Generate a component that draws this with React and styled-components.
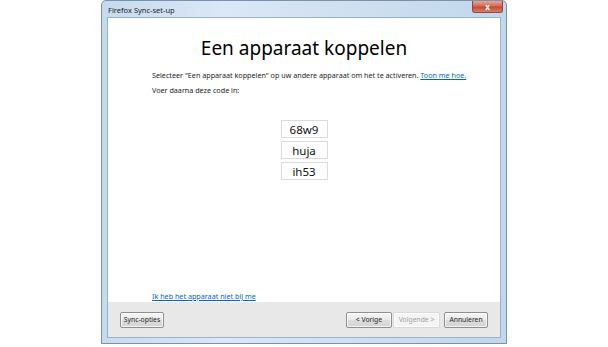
import React from "react";
import styled, { createGlobalStyle } from "styled-components";

const Global = createGlobalStyle`
  html, body { margin: 0; padding: 0; background: #fff; }
  body { font-family: "Noto Sans", "Open Sans", sans-serif; }
`;

const Page = styled.div`
  width: 608px;
  height: 347px;
  display: flex;
  padding-left: 101px;
  box-sizing: border-box;
`;

const Window = styled.div`
  width: 406px;
  height: 344px;
  box-sizing: border-box;
  border: 1px solid #7892ad;
  border-radius: 5px 5px 0 0;
  background: linear-gradient(90deg, #c6daee 0%, #dbe8f5 30%, #cfe0f1 60%, #c2d7ec 100%);
  display: flex;
  flex-direction: column;
  padding: 0 5px 5px 5px;
`;

const TitleBar = styled.div`
  height: 16px;
  display: flex;
  align-items: flex-start;
  justify-content: space-between;
`;

const Title = styled.span`
  font-size: 7.5px;
  color: #1e1e1e;
  margin-top: 4px;
  margin-left: 1px;
`;

const CloseButton = styled.div`
  width: 31px;
  height: 12px;
  margin-right: -2px;
  border: 1px solid #8a4a40;
  border-top: none;
  border-radius: 0 0 3px 3px;
  background: linear-gradient(180deg, #e8a496 0%, #d66a55 45%, #c44a36 55%, #d8806a 100%);
  display: flex;
  align-items: center;
  justify-content: center;
  color: #fff;
  font-size: 8px;
  font-weight: bold;
  box-sizing: border-box;
`;

const Client = styled.div`
  flex: 1;
  border: 1px solid #9ab3cc;
  background: #fff;
  display: flex;
  flex-direction: column;
`;

const Content = styled.div`
  flex: 1;
  display: flex;
  flex-direction: column;
  padding: 0 0 0 44px;
`;

const Heading = styled.h1`
  margin: 19px 0 0 -44px;
  font-size: 19px;
  font-weight: normal;
  text-align: center;
  color: #000;
  line-height: 22px;
`;

const Paragraph = styled.p`
  margin: ${(p) => p.$top}px 0 0 0;
  font-size: 7.2px;
  line-height: 10px;
  color: #1e1e1e;
`;

const Link = styled.a`
  color: #0066cc;
  text-decoration: underline;
  cursor: pointer;
`;

const Codes = styled.div`
  display: flex;
  flex-direction: column;
  align-items: center;
  gap: 3px;
  margin: 25px 0 0 -44px;
`;

const CodeBox = styled.div`
  width: 45px;
  height: 16px;
  border: 1px solid #dcdcdc;
  display: flex;
  align-items: center;
  justify-content: center;
  font-size: 11.5px;
  color: #111;
`;

const Spacer = styled.div`
  flex: 1;
`;

const BottomLink = styled.div`
  font-size: 7.2px;
  line-height: 10px;
  margin-bottom: 1px;
`;

const Footer = styled.div`
  height: 35px;
  background: #e8e8e8;
  display: flex;
  align-items: center;
  padding: 0 12px 0 12px;
`;

const Button = styled.button`
  height: 16px;
  width: ${(p) => p.$w}px;
  padding: 0;
  font-family: inherit;
  font-size: 6.8px;
  color: ${(p) => (p.$disabled ? "#a0a0a0" : "#1e1e1e")};
  border: 1px solid ${(p) => (p.$disabled ? "#dadada" : "#8e8f8f")};
  border-radius: 2px;
  background: ${(p) =>
    p.$disabled
      ? "#f4f4f4"
      : "linear-gradient(180deg, #f6f6f6 0%, #e9e9e9 48%, #dcdcdc 52%, #d4d4d4 100%)"};
  box-shadow: inset 0 0 0 1px rgba(255,255,255,0.7);
  display: flex;
  align-items: center;
  justify-content: center;
  white-space: nowrap;
  margin-left: ${(p) => p.$ml || 0}px;
`;

const Grow = styled.div`
  flex: 1;
`;

export default function App() {
  return (
    <>
      <Global />
      <Page>
        <Window>
          <TitleBar>
            <Title>Firefox Sync-set-up</Title>
            <CloseButton>x</CloseButton>
          </TitleBar>
          <Client>
            <Content>
              <Heading>Een apparaat koppelen</Heading>
              <Paragraph $top={11}>
                Selecteer "Een apparaat koppelen" op uw andere apparaat om het te activeren.{" "}
                <Link>Toon me hoe.</Link>
              </Paragraph>
              <Paragraph $top={5}>Voer daarna deze code in:</Paragraph>
              <Codes>
                <CodeBox>68w9</CodeBox>
                <CodeBox>huja</CodeBox>
                <CodeBox>ih53</CodeBox>
              </Codes>
              <Spacer />
              <BottomLink>
                <Link>Ik heb het apparaat niet bij me</Link>
              </BottomLink>
            </Content>
            <Footer>
              <Button $w={44}>Sync-opties</Button>
              <Grow />
              <Button $w={46}>&lt; Vorige</Button>
              <Button $w={47} $ml={1} $disabled>Volgende &gt;</Button>
              <Button $w={44} $ml={4}>Annuleren</Button>
            </Footer>
          </Client>
        </Window>
      </Page>
    </>
  );
}
